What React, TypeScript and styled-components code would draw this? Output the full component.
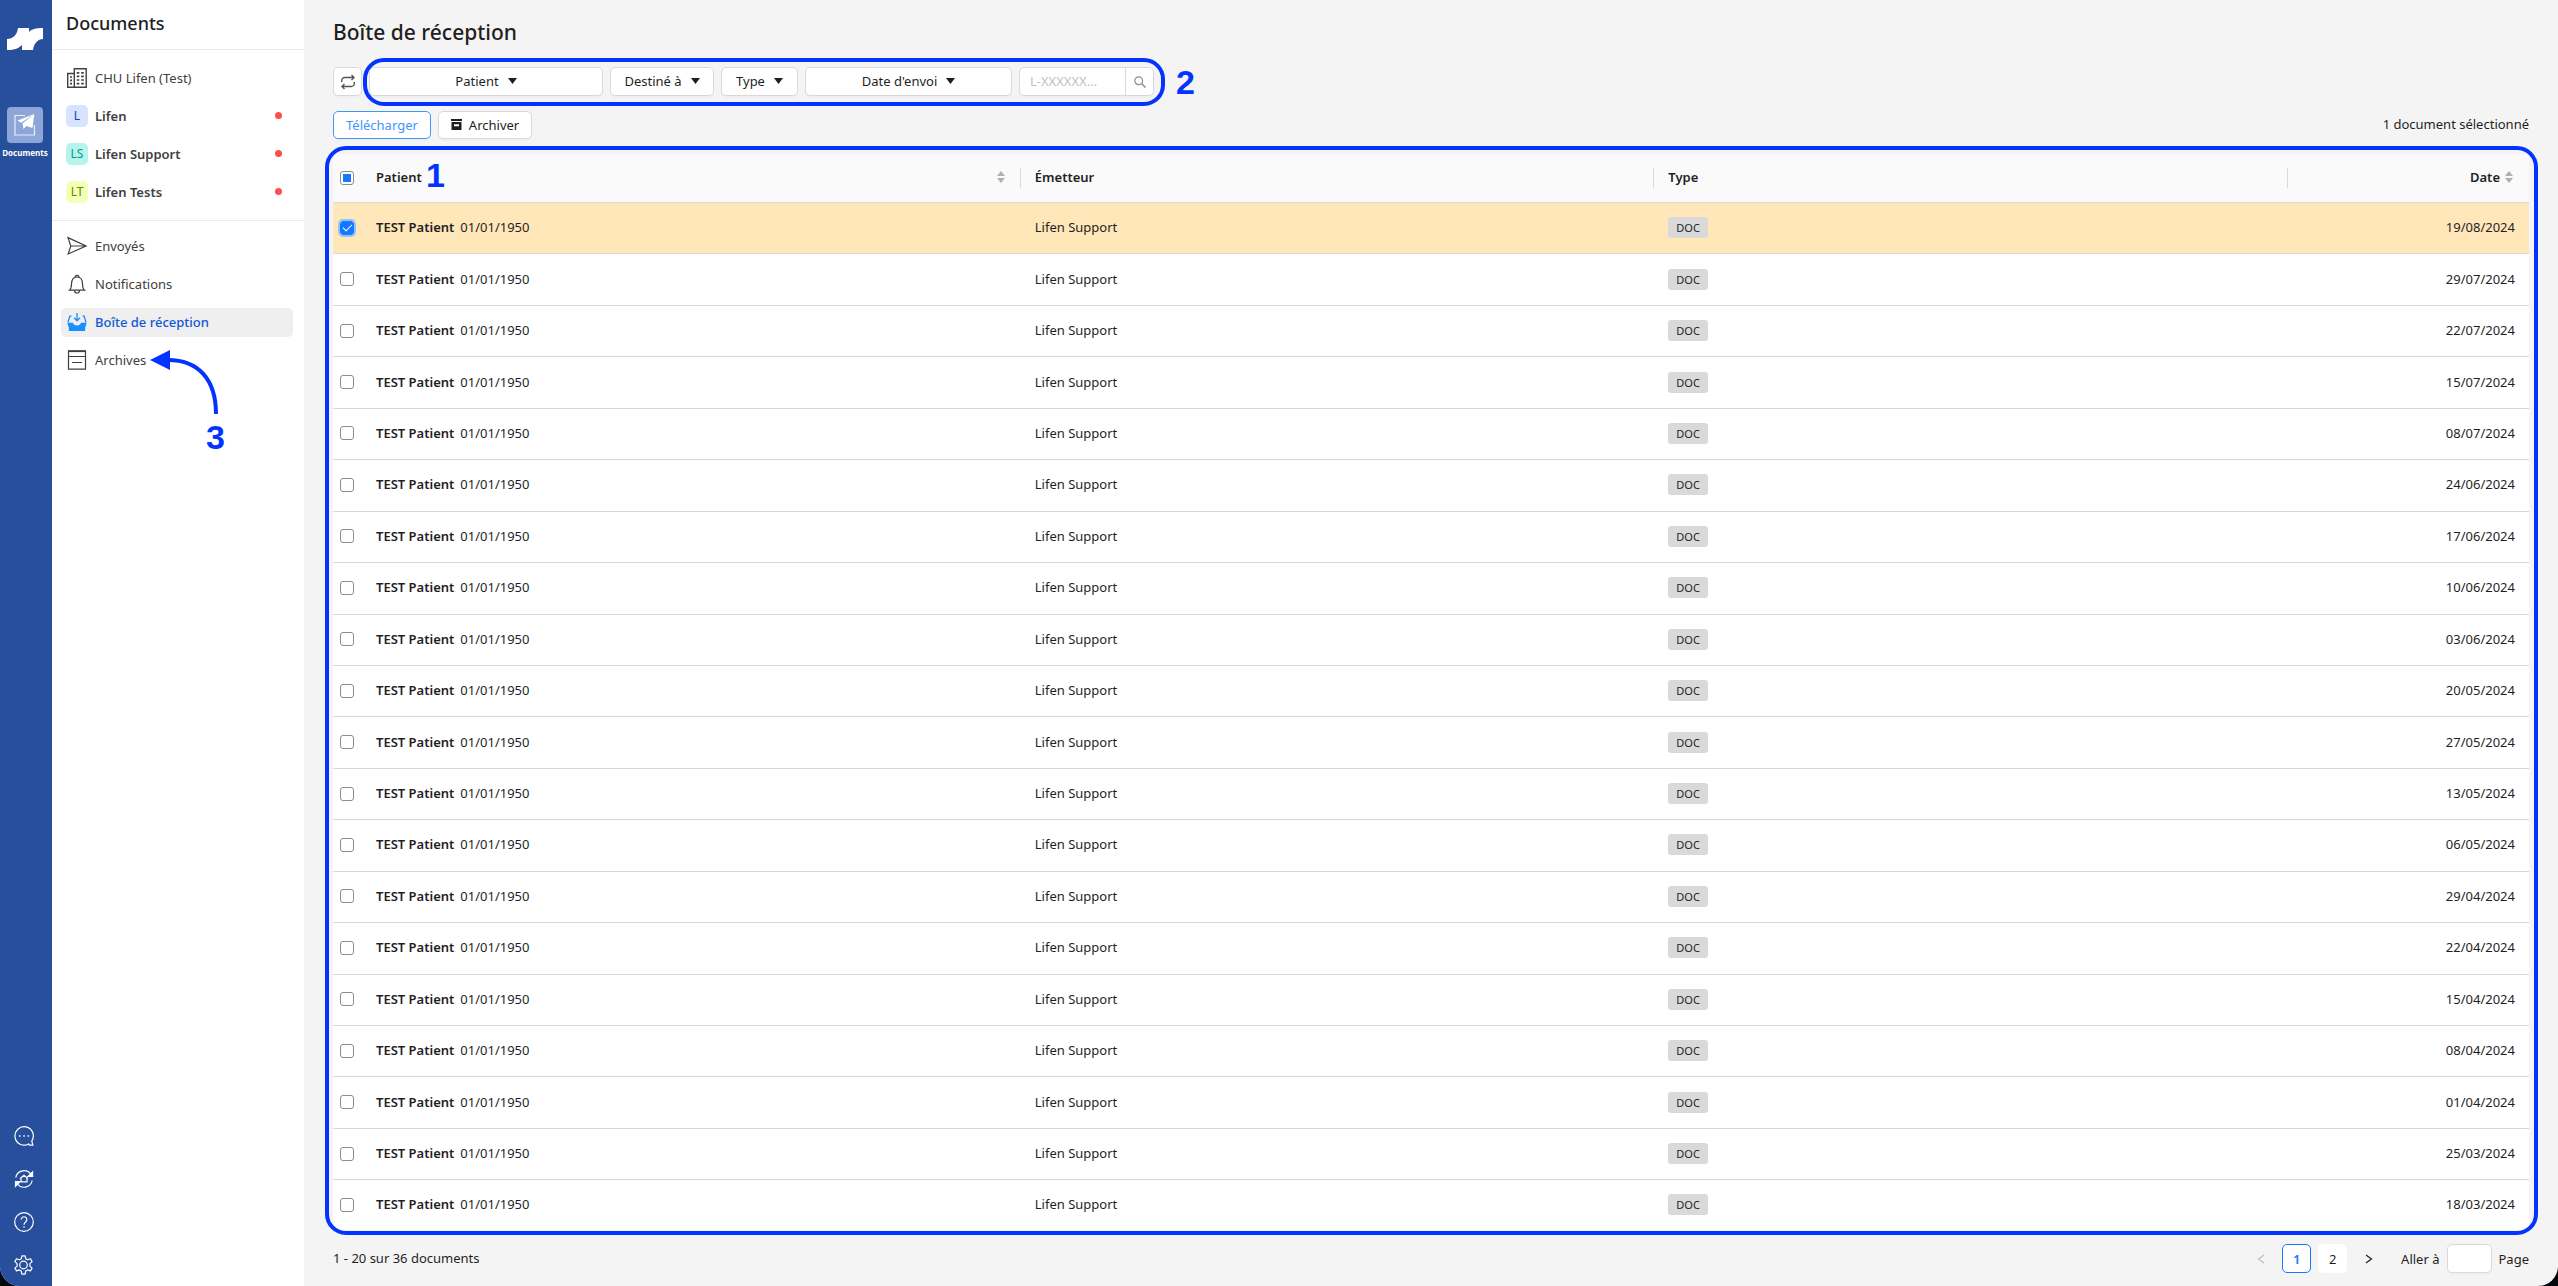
import React, { useEffect, useRef, useState } from "react";
import styled, { createGlobalStyle, css } from "styled-components";

const GlobalStyle = createGlobalStyle`
  *, *::before, *::after { box-sizing: border-box; }
  html, body { margin: 0; background: #05080c; }
  body, button, input, select {
    font-family: "Noto Sans", "Open Sans", sans-serif;
    font-size: 13px;
    line-height: 20px;
    color: #1f1f1f;
  }
`;

const BLUE = "#0433ff";

/* ---------- shell ---------- */

const Shell = styled.div`
  display: flex;
  min-height: 100vh;
  background: #f4f4f4;
  border-radius: 0 0 20px 20px;
  overflow: hidden;
`;

const Rail = styled.nav`
  flex: 0 0 52px;
  display: flex;
  flex-direction: column;
  align-items: center;
  padding: 28px 2px 11px 0;
  background: #284f9b;
  color: #fff;
  svg { display: block; }
`;

const RailApp = styled.a`
  margin-top: 57px;
  display: flex;
  flex-direction: column;
  align-items: center;
  gap: 4px;
  color: #fff;
  font-size: 8px;
  line-height: 12px;
  font-weight: 700;
  text-decoration: none;
`;

const RailTile = styled.span`
  display: grid;
  place-items: center;
  width: 36px;
  height: 36px;
  border-radius: 4px;
  background: #8ea6d7;
`;

const RailTools = styled.div`
  margin-top: auto;
  padding-right: 3px;
  display: flex;
  flex-direction: column;
  gap: 23px;
`;

const IconButton = styled.button`
  display: block;
  padding: 0;
  border: 0;
  background: none;
  color: inherit;
`;

const Sidebar = styled.aside`
  flex: 0 0 252px;
  background: #fff;
`;

const SidebarTitle = styled.h2`
  margin: 0;
  height: 50px;
  padding-left: 14px;
  border-bottom: 1px solid #ebebeb;
  font-size: 18px;
  line-height: 46px;
  font-weight: 500;
`;

const NavList = styled.ul`
  list-style: none;
  margin: 0;
  padding: 14px 11px 13px 9px;
  display: flex;
  flex-direction: column;
  gap: 9px;
  & + & {
    border-top: 1px solid #ebebeb;
    padding-top: 11px;
  }
`;

const NavLink = styled.a<{ $tone?: "strong" | "active" }>`
  display: flex;
  align-items: center;
  gap: 7px;
  height: 29px;
  padding: 0 11px 2px 5px;
  border-radius: 5px;
  color: #404040;
  text-decoration: none;
  ${(p) => p.$tone === "strong" && css`font-weight: 600;`}
  ${(p) => p.$tone === "active" && css`
    font-weight: 500;
    color: #1257d6;
    background: #efefef;
  `}
`;

const IconSlot = styled.span`
  width: 22px;
  height: 22px;
  display: grid;
  place-items: center;
`;

const Avatar = styled(IconSlot)<{ $bg: string; $fg: string }>`
  border-radius: 5px;
  font-size: 12px;
  font-weight: 400;
  background: ${(p) => p.$bg};
  color: ${(p) => p.$fg};
`;

const Dot = styled.span`
  margin-left: auto;
  width: 7px;
  height: 7px;
  border-radius: 50%;
  background: #ff4d4f;
`;

/* ---------- main ---------- */

const Main = styled.main`
  flex: 1;
  min-width: 0;
  display: flex;
  flex-direction: column;
  padding: 17px 29px 13px;
`;

const Title = styled.h1`
  margin: 0 0 20px;
  font-size: 21px;
  line-height: 30px;
  font-weight: 500;
`;

const Toolbar = styled.div`
  display: flex;
  gap: 7px;
`;

const Filters = styled.div`
  position: relative;
  display: flex;
  gap: 7px;
`;

const controlBox = css`
  height: 29px;
  border: 1px solid #d9d9d9;
  border-radius: 5px;
  background: #fff;
  box-shadow: 0 2px 0 rgba(0, 0, 0, 0.02);
`;

const SquareButton = styled.button`
  ${controlBox}
  width: 29px;
  padding: 0;
  display: grid;
  place-items: center;
  color: #555;
`;

const FilterBox = styled.label<{ $width: number }>`
  ${controlBox}
  width: ${(p) => p.$width}px;
  padding-bottom: 1px;
  display: flex;
  align-items: center;
  justify-content: center;
  gap: 9px;
`;

const FilterSelect = styled.select`
  appearance: none;
  field-sizing: content;
  padding: 0;
  border: 0;
  background: none;
`;

const SearchBox = styled.div`
  ${controlBox}
  width: 135px;
  display: flex;
`;

const SearchInput = styled.input`
  flex: 1;
  min-width: 0;
  padding: 0 10px 1px;
  border: 0;
  background: none;
  &::placeholder { color: #bfbfbf; opacity: 1; }
`;

const SearchButton = styled.button`
  width: 28px;
  padding: 0;
  border: 0;
  border-left: 1px solid #d9d9d9;
  background: none;
  display: grid;
  place-items: center;
  color: #8c8c8c;
`;

const Actions = styled.div`
  display: flex;
  align-items: center;
  gap: 7px;
  margin: 15px 0;
`;

const ActionButton = styled.button<{ $primary?: boolean }>`
  ${controlBox}
  height: 28px;
  padding: 0 12px 1px;
  display: flex;
  align-items: center;
  gap: 7px;
  ${(p) => p.$primary && css`
    border-color: #4096ff;
    color: #4096ff;
  `}
`;

const Selected = styled.span`
  margin-left: auto;
  padding-bottom: 2px;
`;

/* ---------- table ---------- */

const TableArea = styled.div`
  position: relative;
  flex: 1;
  display: flex;
`;

const Table = styled.table`
  width: 100%;
  table-layout: fixed;
  border-collapse: separate;
  border-spacing: 0;
  background: #fff;
`;

const Col = styled.col<{ $w?: string }>`
  width: ${(p) => p.$w ?? "auto"};
`;

const cell = css<{ $right?: boolean }>`
  padding: 0 14px 2px;
  text-align: ${(p) => (p.$right ? "right" : "left")};
  border-bottom: 1px solid #d9d9d9;
`;

const Th = styled.th<{ $right?: boolean; $divider?: boolean }>`
  ${cell}
  height: 49px;
  font-weight: 600;
  background: #fafafa;
  ${(p) => p.$divider && css`
    background: linear-gradient(#d9d9d9, #d9d9d9) no-repeat right center / 1px 20px #fafafa;
  `}
`;

const HeadLabel = styled.span<{ $spread?: boolean }>`
  display: flex;
  align-items: center;
  justify-content: ${(p) => (p.$spread ? "space-between" : "flex-end")};
  gap: 5px;
  padding-right: 2px;
`;

const Tr = styled.tr<{ $on?: boolean }>`
  background: ${(p) => (p.$on ? "#ffe7ba" : "#fff")};
  &:last-child td { border-bottom: 0; }
`;

const Td = styled.td<{ $right?: boolean }>`
  ${cell}
`;

const checkCell = css`
  padding: 0 0 1px 7px;
`;
const ThCheck = styled(Th)`${checkCell}`;
const TdCheck = styled(Td)`${checkCell}`;

const Check = styled.input`
  appearance: none;
  display: grid;
  place-content: center;
  width: 14px;
  height: 14px;
  margin: 0;
  border: 1px solid #8c8c8c;
  border-radius: 3px;
  background: #fff;
  &:indeterminate::after {
    content: "";
    width: 8px;
    height: 8px;
    background: #1677ff;
  }
  &:checked {
    border-color: #1677ff;
    background: #1677ff;
    outline: 2px solid #91c3fd;
  }
  &:checked::after {
    content: "";
    width: 5px;
    height: 9px;
    margin-bottom: 2px;
    border: solid #fff;
    border-width: 0 1px 1px 0;
    transform: rotate(45deg);
  }
`;

const PatientName = styled.span`
  margin-right: 6px;
  font-weight: 600;
`;

const Tag = styled.span`
  display: inline-block;
  padding: 0 8px;
  border-radius: 3px;
  font-size: 11px;
  line-height: 21px;
  background: #d9d9d9;
  vertical-align: middle;
`;

/* ---------- footer ---------- */

const Footer = styled.footer`
  display: flex;
  align-items: center;
  justify-content: space-between;
  margin-top: 14px;
`;

const Count = styled.span`
  padding-bottom: 2px;
`;

const Pager = styled.div`
  display: flex;
  align-items: center;
  gap: 7px;
`;

const PageButton = styled.button<{ $kind?: "current" | "arrow" }>`
  width: 29px;
  height: 29px;
  padding: 0;
  display: grid;
  place-items: center;
  border: 1px solid transparent;
  border-radius: 5px;
  background: ${(p) => (p.$kind === "arrow" ? "none" : "#fff")};
  ${(p) => p.$kind === "current" && css`
    border-color: #1677ff;
    color: #1677ff;
    font-weight: 600;
  `}
  &:disabled { color: #bfbfbf; }
`;

const GoTo = styled.label`
  display: flex;
  align-items: center;
  gap: 7px;
  margin-left: 11px;
`;

const GoToInput = styled.input`
  ${controlBox}
  width: 45px;
  padding: 0 8px;
`;

/* ---------- annotations ---------- */

const Ring = styled.div<{ $inset: string }>`
  position: absolute;
  inset: ${(p) => p.$inset};
  border: 4px solid ${BLUE};
  border-radius: 21px;
  pointer-events: none;
`;

const Mark = styled.span<{ $left: string; $top: string }>`
  position: absolute;
  left: ${(p) => p.$left};
  top: ${(p) => p.$top};
  font-family: "Liberation Sans", Arial, sans-serif;
  font-size: 34px;
  line-height: 34px;
  font-weight: 700;
  color: ${BLUE};
  pointer-events: none;
`;

const Anchor = styled.li`
  position: relative;
`;

const ArrowSvg = styled.svg`
  position: absolute;
  left: 89px;
  top: 4px;
`;

/* ---------- icons ---------- */

const line = { fill: "none", stroke: "currentColor", strokeWidth: 1.2 } as const;

const Logo = () => (
  <svg width="36" height="22" viewBox="0 0 36 22" fill="#fff" aria-hidden="true">
    <path d="M11 0h11v4C25 1 28 0 36 0v11c-5 0-9 4-10 11H15v-5c-3 3-7 5-15 5V11C6 11 10 7 11 0z" />
  </svg>
);
const DocIcon = () => (
  <svg width="22" height="22" viewBox="0 0 22 22" aria-hidden="true">
    <path d="M11 1.500H1v19.500h19.500V11" fill="none" stroke="#fff" strokeOpacity=".8" strokeWidth="1.200" />
    <path d="M20.300 0 3.500 6.500l3.700 2.300zM20.300 0 8.500 9.500l1 5.500 3-3 6 2z" fill="#fff" />
  </svg>
);
const ChatIcon = () => (
  <svg width="20" height="20" viewBox="0 0 20 20" {...line} aria-hidden="true">
    <path d="M18.800 19.200h-3.300l-.8-1.300A9.200 9.200 0 1 1 17.800 15z" />
    <path d="M5 10h1.500M9.300 10h1.500M13.600 10h1.500" strokeWidth="1.500" />
  </svg>
);
const SyncIcon = () => (
  <svg width="20" height="20" viewBox="0 0 20 20" {...line} aria-hidden="true">
    <path d="M1.800 8.500a8.300 8.300 0 0 1 15.400-2.600M18.200 11.500A8.300 8.300 0 0 1 3 14.300" />
    <path d="M18.600 3v4.500h-4.500zM1.500 17.200v-4.500H6z" fill="currentColor" />
    <path d="M7 12.800V9.500L6.500 9.200 10 6.300l3.500 2.900-.5.300v3.300z" />
  </svg>
);
const HelpIcon = () => (
  <svg width="20" height="20" viewBox="0 0 20 20" {...line} aria-hidden="true">
    <circle cx="10" cy="10" r="9.300" />
    <path d="M7.200 7.500a2.800 2.800 0 1 1 4.600 2.200c-1.200 1-1.800 1.500-1.800 3M10 14.300v1.500" />
  </svg>
);
const GearIcon = () => (
  <svg width="20" height="20" viewBox="0 0 20 20" {...line} strokeLinejoin="round" aria-hidden="true">
    <circle cx="9.500" cy="10" r="3.800" />
    <path d="M7.900.8h3.200l.6 2.900 1.900 1.100 2.900-1 1.600 2.800-2.200 2v2.500l2.200 2-1.600 2.800-2.900-1-1.900 1.200-.6 3H7.900l-.6-3-1.900-1.200-2.900 1L.9 13.100l2.200-2V8.600l-2.200-2 1.600-2.800 2.900 1 1.900-1.100z" />
  </svg>
);
const BuildingIcon = () => (
  <svg width="20" height="20" viewBox="0 0 20 20" {...line} aria-hidden="true">
    <path d="M.7 5.500h6.600v13.800H.7zM7.300.8h11.900v18.500H7.300z" strokeWidth="1.400" />
    <path d="M3 9h2M3 12.300h2M3 15.700h2M9.700 4.800h2.600M14.200 4.800h2.600M9.700 8.300h2.600M14.200 8.300h2.600M9.700 12h2.600M14.200 12h2.600M9.700 15.700h2.600M14.200 15.700h2.600" strokeWidth="1.700" />
  </svg>
);
const SendIcon = () => (
  <svg width="20" height="20" viewBox="0 0 20 20" {...line} strokeWidth="1.200" aria-hidden="true">
    <path d="M1 1.600 19 10 1.200 18l2.600-8zM3.800 10H19" />
  </svg>
);
const BellIcon = () => (
  <svg width="20" height="20" viewBox="0 0 20 20" {...line} strokeWidth="1.200" aria-hidden="true">
    <path d="M2.500 16.200c1.500-1.300 2-3 2-6.200C4.500 5.500 6.500 3 10 3s5.500 2.500 5.500 7c0 3.200.5 4.900 2 6.200zM8 3.300a2 2 0 1 1 4 0M7.500 16.500a2.500 2.500 0 0 0 5 0" />
  </svg>
);
const InboxIcon = () => (
  <svg width="20" height="20" viewBox="0 0 20 20" aria-hidden="true">
    <path d="M.5 10.800H6c.4 1.800 1.800 2.700 4 2.700s3.600-.9 4-2.700h5.500l-.8 4h-.5V19H1.800v-4.200h-.5z" fill="#1890ff" />
    <path d="M4.500 4.200H2.800L1 10.500M15.500 4.200h1.700L19 10.500M10 1v7.500M7 5.800l3 3 3-3" fill="none" stroke="#1890ff" strokeWidth="1.300" />
  </svg>
);
const ArchiveIcon = () => (
  <svg width="20" height="20" viewBox="0 0 20 20" {...line} aria-hidden="true">
    <path d="M1.500 1.200h17v18h-17zM1.500 6.500h17M5 12.500h10" />
    <path d="M1 1.200h18" strokeWidth="1.800" />
  </svg>
);
const RepeatIcon = () => (
  <svg width="16" height="16" viewBox="0 0 16 16" {...line} strokeWidth="1.400" aria-hidden="true">
    <path d="M1.700 8V6.500a3 3 0 0 1 3-3H14M11.500 1 14 3.500 11.500 6M14.300 8v1.500a3 3 0 0 1-3 3H2M4.500 10 2 12.500 4.500 15" />
  </svg>
);
const Caret = () => (
  <svg width="9" height="6" viewBox="0 0 9 6" aria-hidden="true">
    <path d="M0 0h9L4.500 6z" fill="#1f1f1f" />
  </svg>
);
const SearchIcon = () => (
  <svg width="12" height="12" viewBox="0 0 12 12" {...line} aria-hidden="true">
    <circle cx="4.700" cy="4.700" r="3.900" />
    <path d="m7.500 7.500 4 4" strokeWidth="1.500" />
  </svg>
);
const BoxIcon = () => (
  <svg width="11" height="12" viewBox="0 0 11 12" fill="#1f1f1f" aria-hidden="true">
    <path d="M0 0h11v2H0z" />
    <path fillRule="evenodd" d="M.5 3h10v8H.5zM3 5.300v2h5v-2z" />
  </svg>
);
const Sorter = () => (
  <svg width="8" height="12" viewBox="0 0 8 12" fill="#b0b0b0" aria-hidden="true">
    <path d="M4 0l4 5H0zM4 12l4-5H0z" />
  </svg>
);
const Chevron = ({ left }: { left?: boolean }) => (
  <svg width="8" height="10" viewBox="0 0 8 10" {...line} aria-hidden="true">
    <path d={left ? "M7 1 1.500 5 7 9" : "M1 1l5.500 4L1 9"} />
  </svg>
);

/* ---------- data ---------- */

const groups = [
  { initials: "L", name: "Lifen", bg: "#d6e4ff", fg: "#1d39c4" },
  { initials: "LS", name: "Lifen Support", bg: "#b5f5ec", fg: "#08979c" },
  { initials: "LT", name: "Lifen Tests", bg: "#f4ffb8", fg: "#5b8c00" },
];

const dates = [
  "19/08/2024", "29/07/2024", "22/07/2024", "15/07/2024", "08/07/2024",
  "24/06/2024", "17/06/2024", "10/06/2024", "03/06/2024", "20/05/2024",
  "27/05/2024", "13/05/2024", "06/05/2024", "29/04/2024", "22/04/2024",
  "15/04/2024", "08/04/2024", "01/04/2024", "25/03/2024", "18/03/2024",
];

const Filter = ({ name, width }: { name: string; width: number }) => (
  <FilterBox $width={width}>
    <FilterSelect aria-label={name}>
      <option>{name}</option>
    </FilterSelect>
    <Caret />
  </FilterBox>
);

export default function App() {
  const [picked, setPicked] = useState<number[]>([0]);
  const all = useRef<HTMLInputElement>(null);
  useEffect(() => {
    if (all.current) {
      all.current.indeterminate = picked.length > 0 && picked.length < dates.length;
    }
  }, [picked]);
  const toggle = (i: number) =>
    setPicked((p) => (p.includes(i) ? p.filter((n) => n !== i) : [...p, i]));
  const toggleAll = () =>
    setPicked((p) => (p.length === dates.length ? [] : dates.map((_, i) => i)));

  return (
    <>
      <GlobalStyle />
      <Shell>
        <Rail>
          <Logo />
          <RailApp href="#documents">
            <RailTile><DocIcon /></RailTile>
            Documents
          </RailApp>
          <RailTools>
            <IconButton aria-label="Messages"><ChatIcon /></IconButton>
            <IconButton aria-label="Synchronisation"><SyncIcon /></IconButton>
            <IconButton aria-label="Aide"><HelpIcon /></IconButton>
            <IconButton aria-label="Paramètres"><GearIcon /></IconButton>
          </RailTools>
        </Rail>

        <Sidebar>
          <SidebarTitle>Documents</SidebarTitle>
          <NavList>
            <li>
              <NavLink href="#chu"><IconSlot><BuildingIcon /></IconSlot>CHU Lifen (Test)</NavLink>
            </li>
            {groups.map((g) => (
              <li key={g.name}>
                <NavLink href={`#${g.initials}`} $tone="strong">
                  <Avatar $bg={g.bg} $fg={g.fg}>{g.initials}</Avatar>
                  {g.name}
                  <Dot />
                </NavLink>
              </li>
            ))}
          </NavList>
          <NavList>
            <li><NavLink href="#sent"><IconSlot><SendIcon /></IconSlot>Envoyés</NavLink></li>
            <li><NavLink href="#notifications"><IconSlot><BellIcon /></IconSlot>Notifications</NavLink></li>
            <li><NavLink href="#inbox" $tone="active"><IconSlot><InboxIcon /></IconSlot>Boîte de réception</NavLink></li>
            <Anchor>
              <NavLink href="#archives"><IconSlot><ArchiveIcon /></IconSlot>Archives</NavLink>
              <ArrowSvg width="70" height="64" viewBox="0 0 70 64" aria-hidden="true">
                <path d="M0 10 20 0v20z" fill={BLUE} />
                <path d="M18 10C48 10 66 29 66 64" fill="none" stroke={BLUE} strokeWidth="4" />
              </ArrowSvg>
              <Mark $left="145px" $top="74px">3</Mark>
            </Anchor>
          </NavList>
        </Sidebar>

        <Main>
          <Title>Boîte de réception</Title>
          <Toolbar>
            <SquareButton aria-label="Actualiser"><RepeatIcon /></SquareButton>
            <Filters>
              <Filter name="Patient" width={234} />
              <Filter name="Destiné à" width={104} />
              <Filter name="Type" width={77} />
              <Filter name="Date d'envoi" width={207} />
              <SearchBox>
                <SearchInput aria-label="Référence" placeholder="L-XXXXXX..." />
                <SearchButton aria-label="Rechercher"><SearchIcon /></SearchButton>
              </SearchBox>
              <Ring $inset="-9px -11px -10px -6px" />
              <Mark $left="calc(100% + 22px)" $top="-2px">2</Mark>
            </Filters>
          </Toolbar>
          <Actions>
            <ActionButton $primary>Télécharger</ActionButton>
            <ActionButton><BoxIcon />Archiver</ActionButton>
            <Selected>1 document sélectionné</Selected>
          </Actions>

          <TableArea>
            <Table>
              <colgroup>
                <Col $w="29px" />
                <Col $w="30%" />
                <Col $w="28.85%" />
                <Col $w="28.85%" />
                <Col />
              </colgroup>
              <thead>
                <tr>
                  <ThCheck>
                    <Check ref={all} type="checkbox" aria-label="Tout sélectionner"
                      checked={picked.length === dates.length} onChange={toggleAll} />
                  </ThCheck>
                  <Th $divider><HeadLabel $spread>Patient<Sorter /></HeadLabel></Th>
                  <Th $divider>Émetteur</Th>
                  <Th $divider>Type</Th>
                  <Th $right><HeadLabel>Date<Sorter /></HeadLabel></Th>
                </tr>
              </thead>
              <tbody>
                {dates.map((date, i) => (
                  <Tr key={date} $on={picked.includes(i)}>
                    <TdCheck>
                      <Check type="checkbox" aria-label={`Document du ${date}`}
                        checked={picked.includes(i)} onChange={() => toggle(i)} />
                    </TdCheck>
                    <Td><PatientName>TEST Patient</PatientName>01/01/1950</Td>
                    <Td>Lifen Support</Td>
                    <Td><Tag>DOC</Tag></Td>
                    <Td $right>{date}</Td>
                  </Tr>
                ))}
              </tbody>
            </Table>
            <Ring $inset="-8px -9px -5px -8px" />
            <Mark $left="93px" $top="4px">1</Mark>
          </TableArea>

          <Footer>
            <Count>1 - 20 sur 36 documents</Count>
            <Pager>
              <PageButton $kind="arrow" disabled aria-label="Page précédente"><Chevron left /></PageButton>
              <PageButton $kind="current">1</PageButton>
              <PageButton>2</PageButton>
              <PageButton $kind="arrow" aria-label="Page suivante"><Chevron /></PageButton>
              <GoTo>Aller à<GoToInput />Page</GoTo>
            </Pager>
          </Footer>
        </Main>
      </Shell>
    </>
  );
}
